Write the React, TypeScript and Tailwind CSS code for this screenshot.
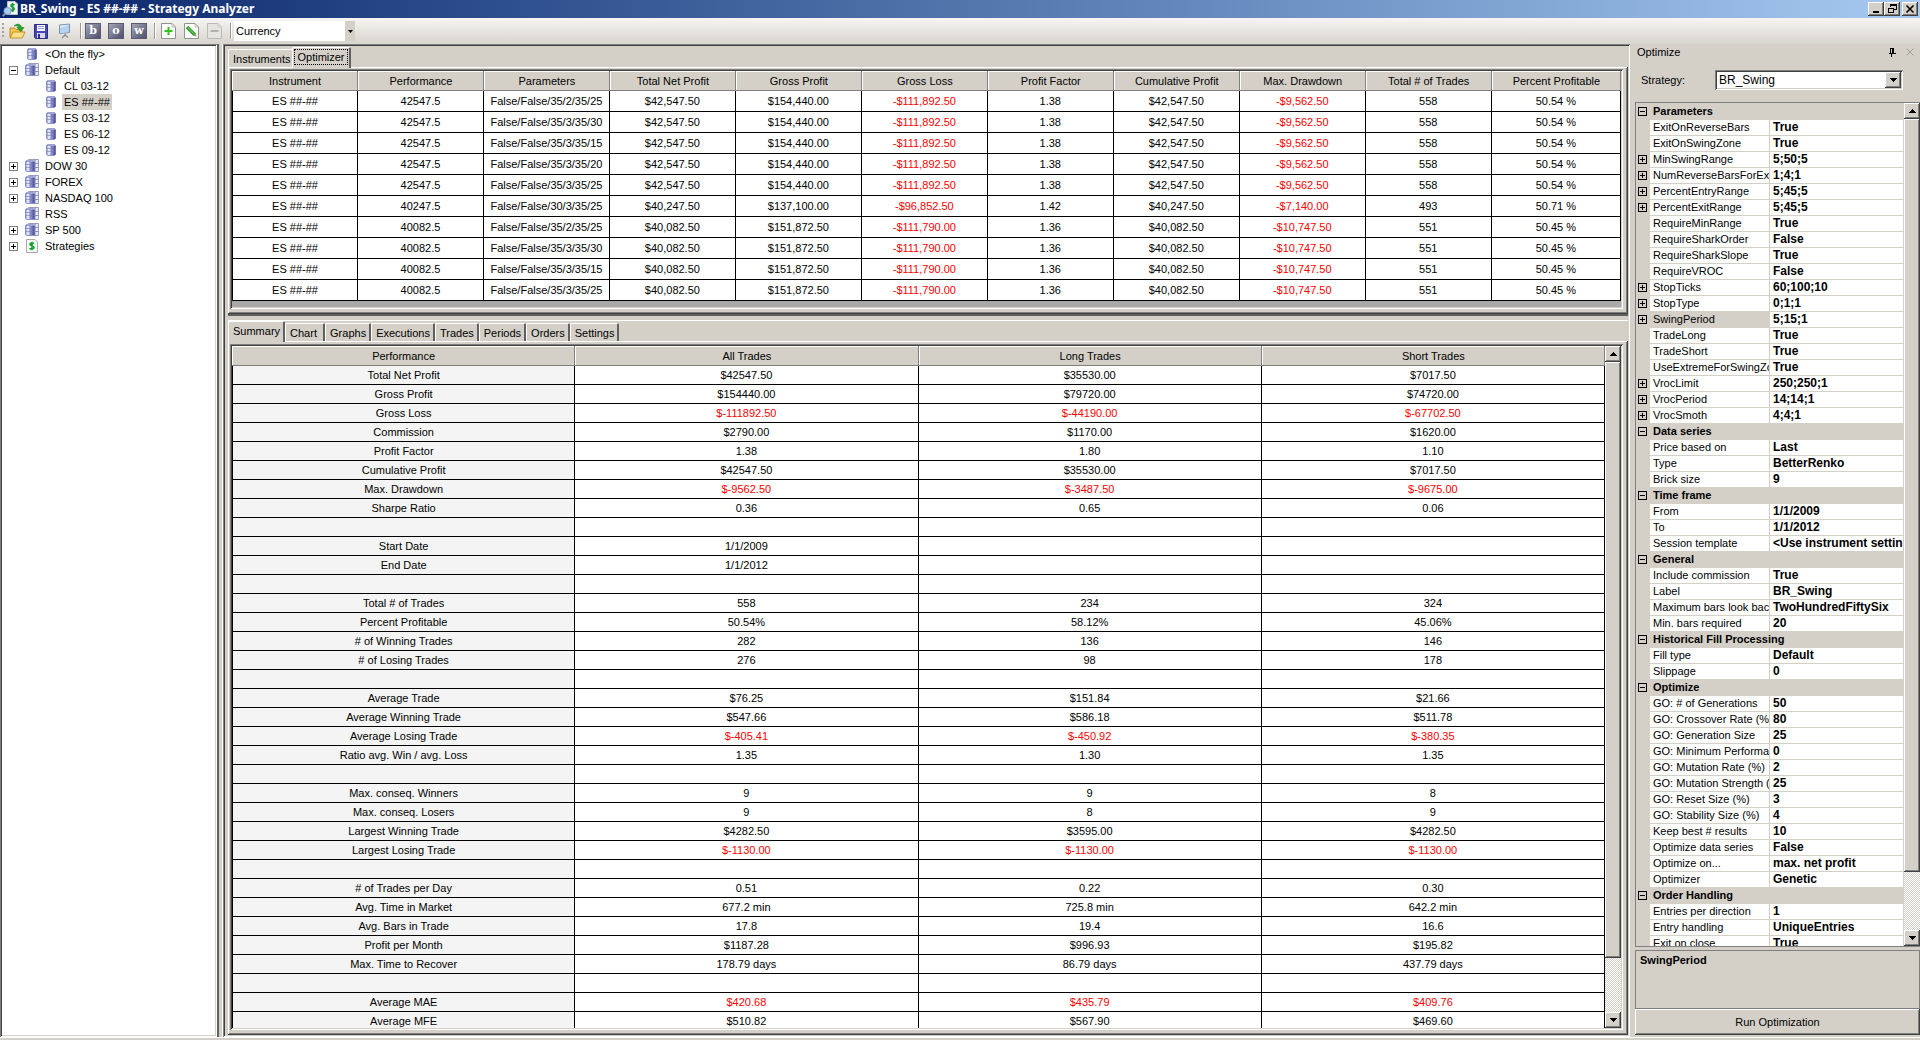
import { useState } from "react"
import type { ReactNode } from "react"
import clsx from "clsx"

const RAISED = "bg-[#d4d0c8] shadow-[inset_-1px_-1px_0_#404040,inset_1px_1px_0_#fff,inset_-2px_-2px_0_#808080]"
const SUNKEN = "shadow-[inset_1px_1px_0_#808080,inset_-1px_-1px_0_#fff,inset_2px_2px_0_#404040,inset_-2px_-2px_0_#d4d0c8]"
const DITHER = "bg-[repeating-conic-gradient(#fff_0_25%,#d4d0c8_0_50%)] bg-[length:2px_2px]"

interface TreeItem {
  label: string
  icon: "single" | "group" | "strategy"
  level: number
  expander?: "+" | "-"
}

const treeItems: TreeItem[] = [
  { label: "<On the fly>", icon: "single", level: 0 },
  { label: "Default", icon: "group", level: 0, expander: "-" },
  { label: "CL 03-12", icon: "single", level: 1 },
  { label: "ES ##-##", icon: "single", level: 1 },
  { label: "ES 03-12", icon: "single", level: 1 },
  { label: "ES 06-12", icon: "single", level: 1 },
  { label: "ES 09-12", icon: "single", level: 1 },
  { label: "DOW 30", icon: "group", level: 0, expander: "+" },
  { label: "FOREX", icon: "group", level: 0, expander: "+" },
  { label: "NASDAQ 100", icon: "group", level: 0, expander: "+" },
  { label: "RSS", icon: "group", level: 0 },
  { label: "SP 500", icon: "group", level: 0, expander: "+" },
  { label: "Strategies", icon: "strategy", level: 0, expander: "+" },
]

const resultColumns = [
  "Instrument", "Performance", "Parameters", "Total Net Profit", "Gross Profit", "Gross Loss",
  "Profit Factor", "Cumulative Profit", "Max. Drawdown", "Total # of Trades", "Percent Profitable",
]

const resultRows = [
  ["ES ##-##", "42547.5", "False/False/35/2/35/25", "$42,547.50", "$154,440.00", "-$111,892.50", "1.38", "$42,547.50", "-$9,562.50", "558", "50.54 %"],
  ["ES ##-##", "42547.5", "False/False/35/3/35/30", "$42,547.50", "$154,440.00", "-$111,892.50", "1.38", "$42,547.50", "-$9,562.50", "558", "50.54 %"],
  ["ES ##-##", "42547.5", "False/False/35/3/35/15", "$42,547.50", "$154,440.00", "-$111,892.50", "1.38", "$42,547.50", "-$9,562.50", "558", "50.54 %"],
  ["ES ##-##", "42547.5", "False/False/35/3/35/20", "$42,547.50", "$154,440.00", "-$111,892.50", "1.38", "$42,547.50", "-$9,562.50", "558", "50.54 %"],
  ["ES ##-##", "42547.5", "False/False/35/3/35/25", "$42,547.50", "$154,440.00", "-$111,892.50", "1.38", "$42,547.50", "-$9,562.50", "558", "50.54 %"],
  ["ES ##-##", "40247.5", "False/False/30/3/35/25", "$40,247.50", "$137,100.00", "-$96,852.50", "1.42", "$40,247.50", "-$7,140.00", "493", "50.71 %"],
  ["ES ##-##", "40082.5", "False/False/35/2/35/25", "$40,082.50", "$151,872.50", "-$111,790.00", "1.36", "$40,082.50", "-$10,747.50", "551", "50.45 %"],
  ["ES ##-##", "40082.5", "False/False/35/3/35/30", "$40,082.50", "$151,872.50", "-$111,790.00", "1.36", "$40,082.50", "-$10,747.50", "551", "50.45 %"],
  ["ES ##-##", "40082.5", "False/False/35/3/35/15", "$40,082.50", "$151,872.50", "-$111,790.00", "1.36", "$40,082.50", "-$10,747.50", "551", "50.45 %"],
  ["ES ##-##", "40082.5", "False/False/35/3/35/25", "$40,082.50", "$151,872.50", "-$111,790.00", "1.36", "$40,082.50", "-$10,747.50", "551", "50.45 %"],
]

const summaryTabs = ["Summary", "Chart", "Graphs", "Executions", "Trades", "Periods", "Orders", "Settings"]

const summaryRows = [
  ["Total Net Profit", "$42547.50", "$35530.00", "$7017.50"],
  ["Gross Profit", "$154440.00", "$79720.00", "$74720.00"],
  ["Gross Loss", "$-111892.50", "$-44190.00", "$-67702.50"],
  ["Commission", "$2790.00", "$1170.00", "$1620.00"],
  ["Profit Factor", "1.38", "1.80", "1.10"],
  ["Cumulative Profit", "$42547.50", "$35530.00", "$7017.50"],
  ["Max. Drawdown", "$-9562.50", "$-3487.50", "$-9675.00"],
  ["Sharpe Ratio", "0.36", "0.65", "0.06"],
  ["", "", "", ""],
  ["Start Date", "1/1/2009", "", ""],
  ["End Date", "1/1/2012", "", ""],
  ["", "", "", ""],
  ["Total # of Trades", "558", "234", "324"],
  ["Percent Profitable", "50.54%", "58.12%", "45.06%"],
  ["# of Winning Trades", "282", "136", "146"],
  ["# of Losing Trades", "276", "98", "178"],
  ["", "", "", ""],
  ["Average Trade", "$76.25", "$151.84", "$21.66"],
  ["Average Winning Trade", "$547.66", "$586.18", "$511.78"],
  ["Average Losing Trade", "$-405.41", "$-450.92", "$-380.35"],
  ["Ratio avg. Win / avg. Loss", "1.35", "1.30", "1.35"],
  ["", "", "", ""],
  ["Max. conseq. Winners", "9", "9", "8"],
  ["Max. conseq. Losers", "9", "8", "9"],
  ["Largest Winning Trade", "$4282.50", "$3595.00", "$4282.50"],
  ["Largest Losing Trade", "$-1130.00", "$-1130.00", "$-1130.00"],
  ["", "", "", ""],
  ["# of Trades per Day", "0.51", "0.22", "0.30"],
  ["Avg. Time in Market", "677.2 min", "725.8 min", "642.2 min"],
  ["Avg. Bars in Trade", "17.8", "19.4", "16.6"],
  ["Profit per Month", "$1187.28", "$996.93", "$195.82"],
  ["Max. Time to Recover", "178.79 days", "86.79 days", "437.79 days"],
  ["", "", "", ""],
  ["Average MAE", "$420.68", "$435.79", "$409.76"],
  ["Average MFE", "$510.82", "$567.90", "$469.60"],
]

// [name, value, expandable]
type Property = [string, string, boolean?]

const propertyGroups: { title: string; items: Property[] }[] = [
  {
    title: "Parameters",
    items: [
      ["ExitOnReverseBars", "True"],
      ["ExitOnSwingZone", "True"],
      ["MinSwingRange", "5;50;5", true],
      ["NumReverseBarsForExit", "1;4;1", true],
      ["PercentEntryRange", "5;45;5", true],
      ["PercentExitRange", "5;45;5", true],
      ["RequireMinRange", "True"],
      ["RequireSharkOrder", "False"],
      ["RequireSharkSlope", "True"],
      ["RequireVROC", "False"],
      ["StopTicks", "60;100;10", true],
      ["StopType", "0;1;1", true],
      ["SwingPeriod", "5;15;1", true],
      ["TradeLong", "True"],
      ["TradeShort", "True"],
      ["UseExtremeForSwingZo", "True"],
      ["VrocLimit", "250;250;1", true],
      ["VrocPeriod", "14;14;1", true],
      ["VrocSmoth", "4;4;1", true],
    ],
  },
  {
    title: "Data series",
    items: [["Price based on", "Last"], ["Type", "BetterRenko"], ["Brick size", "9"]],
  },
  {
    title: "Time frame",
    items: [["From", "1/1/2009"], ["To", "1/1/2012"], ["Session template", "<Use instrument setting"]],
  },
  {
    title: "General",
    items: [
      ["Include commission", "True"],
      ["Label", "BR_Swing"],
      ["Maximum bars look back", "TwoHundredFiftySix"],
      ["Min. bars required", "20"],
    ],
  },
  {
    title: "Historical Fill Processing",
    items: [["Fill type", "Default"], ["Slippage", "0"]],
  },
  {
    title: "Optimize",
    items: [
      ["GO: # of Generations", "50"],
      ["GO: Crossover Rate (%)", "80"],
      ["GO: Generation Size", "25"],
      ["GO: Minimum Performan", "0"],
      ["GO: Mutation Rate (%)", "2"],
      ["GO: Mutation Strength (%", "25"],
      ["GO: Reset Size (%)", "3"],
      ["GO: Stability Size (%)", "4"],
      ["Keep best # results", "10"],
      ["Optimize data series", "False"],
      ["Optimize on...", "max. net profit"],
      ["Optimizer", "Genetic"],
    ],
  },
  {
    title: "Order Handling",
    items: [["Entries per direction", "1"], ["Entry handling", "UniqueEntries"], ["Exit on close", "True"]],
  },
]

function Cylinder({ x = 0 }: { x?: number }) {
  return (
    <g transform={`translate(${x} 0)`}>
      <path d="M0.5 2.5 L2 1.5 H8.5 L9.5 2.5 V11.5 L8.5 12.5 H2 L0.5 11.5 Z" fill="#8489c6" stroke="#8d91c0" />
      <path d="M1.5 3 H4.5 V12 H1.5 Z" fill="#dfe3fb" />
      <path d="M7.5 3 H9.5 V12 H7.5 Z" fill="#50569c" />
      <path d="M1 5.5 H9 M1 8.5 H9" stroke="#7176b4" opacity="0.6" />
      <path d="M2 2 H8.5" stroke="#b4b9e6" />
    </g>
  )
}

function TreeIcon({ kind }: { kind: TreeItem["icon"] }) {
  if (kind === "strategy") {
    return (
      <svg width="15" height="14" viewBox="0 0 15 14" aria-hidden="true">
        <path d="M1.5 0.5 H10 L12.5 3 V13.5 H1.5 Z" fill="#fafafa" stroke="#aaa" />
        <path d="M9 4.8 C8 3.5 4.8 3.7 5 5.3 C5.2 7 9 6.6 9 8.6 C9 10.4 5.4 10.4 4.6 9.2 M7 2.8 V11.3" fill="none" stroke="#12a32c" strokeWidth="1.6" />
      </svg>
    )
  }
  return (
    <svg width="15" height="14" viewBox="0 0 15 14" aria-hidden="true">
      {kind === "group" && (
        <>
          <path d="M3.5 0.5 H13.5 V12.5 H3.5 Z" fill="#e8eaf6" stroke="#9a9db8" />
          <path d="M10 0.5 V13" stroke="#7f84b8" />
          <path d="M10 4.5 H14 M10 8.5 H14" stroke="#8b90bd" />
        </>
      )}
      <Cylinder x={kind === "group" ? 0 : 2} />
    </svg>
  )
}

function Expander({ open, dark }: { open: boolean; dark?: boolean }) {
  return (
    <button type="button" aria-label={open ? "Collapse" : "Expand"} className="block">
      <svg width="9" height="9" viewBox="0 0 9 9" shapeRendering="crispEdges">
        <rect x="0.5" y="0.5" width="8" height="8" fill={dark ? "none" : "#fff"} stroke={dark ? "#000" : "#808080"} />
        <path d={open ? "M2 4.5 H7" : "M2 4.5 H7 M4.5 2 V7"} stroke="#000" />
      </svg>
    </button>
  )
}

function Arrow({ up }: { up?: boolean }) {
  return (
    <svg width="7" height="4" viewBox="0 0 7 4" shapeRendering="crispEdges" aria-hidden="true">
      <path d={up ? "M0 4 L3.5 0 L7 4 Z" : "M0 0 H7 L3.5 4 Z"} />
    </svg>
  )
}

function ScrollBar({ thumb }: { thumb: string }) {
  return (
    <div className={clsx("flex w-4 shrink-0 flex-col", DITHER)}>
      <button type="button" aria-label="Scroll up" className={clsx("flex h-4 shrink-0 items-center justify-center", RAISED)}>
        <Arrow up />
      </button>
      <div className="min-h-0 flex-1">
        <div className={clsx(thumb, RAISED)} />
      </div>
      <button type="button" aria-label="Scroll down" className={clsx("flex h-4 shrink-0 items-center justify-center", RAISED)}>
        <Arrow />
      </button>
    </div>
  )
}

function TitleButton({ label, children }: { label: string; children: ReactNode }) {
  return (
    <button type="button" aria-label={label} className={clsx("flex h-3.5 w-4 items-center justify-center", RAISED)}>
      <svg width="12" height="10" viewBox="0 0 12 10" shapeRendering="crispEdges" fill="none" stroke="#000">
        {children}
      </svg>
    </button>
  )
}

function TitleBar() {
  return (
    <header className="flex h-[18px] shrink-0 items-center bg-linear-to-r from-[#0a246a] to-[#a6caf0] px-0.5">
      <svg width="16" height="16" viewBox="0 0 16 16" aria-hidden="true">
        <path d="M5.5 0.5 H13 L15.5 3 V13.5 H5.5 Z" fill="#f4f6f4" stroke="#b9c2c9" />
        <path d="M12.5 4 C11 2.6 8.6 3.4 9 5 C9.4 6.6 12.4 6 12.2 8 C12 9.8 9.4 9.6 8.4 8.6 M10.6 2 V11" fill="none" stroke="#16a030" strokeWidth="1.6" />
        <circle cx="5.5" cy="10" r="3.6" fill="#a9cdec" stroke="#7ba4cf" />
        <path d="M3 12.5 L0.8 15.2" stroke="#8a8f98" strokeWidth="2" />
      </svg>
      <h1 className="ml-0.5 flex-1 font-['Noto_Sans','Open_Sans',sans-serif] text-xs leading-4 font-bold text-white">
        BR_Swing - ES ##-## - Strategy Analyzer
      </h1>
      <TitleButton label="Minimize">
        <path d="M3 8 H9" strokeWidth="2" />
      </TitleButton>
      <TitleButton label="Restore">
        <path d="M4.5 3 V0.5 H10.5 V5.5 H8 M4 1 H11 M2.5 4.5 H7.5 V8.5 H2.5 Z M2 4 H8" />
      </TitleButton>
      <div className="w-0.5" />
      <TitleButton label="Close">
        <path d="M2.5 1.5 L9.5 8.5 M9.5 1.5 L2.5 8.5" strokeWidth="1.6" shapeRendering="auto" />
      </TitleButton>
    </header>
  )
}

function Separator() {
  return <div className="h-4 w-0.5 border-l border-[#9c9a94] bg-white" />
}

function LetterButton({ letter }: { letter: string }) {
  return (
    <button
      type="button"
      className="flex size-4 items-center justify-center border border-[#5a5c74] bg-linear-to-br from-[#a5a7b5] to-[#4c4f6e] pb-0.5 font-['DejaVu_Serif',serif] text-[11px] leading-none font-bold text-white"
    >
      {letter}
    </button>
  )
}

function PageButton({ label, disabled, children }: { label: string; disabled?: boolean; children: ReactNode }) {
  return (
    <button type="button" aria-label={label} disabled={disabled}>
      <svg width="15" height="16" viewBox="0 0 15 16">
        <path d="M0.5 0.5 H11 L14.5 4 V15.5 H0.5 Z" fill={disabled ? "#e6e4df" : "#fbfcfb"} stroke={disabled ? "#bdbab3" : "#8c9690"} />
        <path d="M11 0.5 V4 H14.5" fill="none" stroke={disabled ? "#cfccc6" : "#b4bcb7"} />
        {children}
      </svg>
    </button>
  )
}

function Toolbar() {
  return (
    <div className="flex h-[26px] shrink-0 items-center bg-linear-to-b from-[#f6f5f3] to-[#d8d5cd] pl-0.5">
      <svg width="3" height="16" viewBox="0 0 3 16" shapeRendering="crispEdges" aria-hidden="true">
        <path d="M0 1 H2 M0 5 H2 M0 9 H2 M0 13 H2" stroke="#a5a29a" strokeWidth="2" />
      </svg>
      <div className="flex items-center gap-2 pr-2 pl-1">
        <button type="button" aria-label="Open">
          <svg width="17" height="16" viewBox="0 0 17 16">
            <path d="M1 14.5 V5 H5.5 L7 6.5 H13 V14.5 Z" fill="#f3c64e" stroke="#b88a1e" />
            <path d="M1.2 15 L4 9 H16 L13.2 15 Z" fill="#fbe08a" stroke="#c1932a" />
            <path d="M5 3 C8 0 12 1 12.6 4.5 H15 L11.6 8.5 L8 4.5 H10.2 C9.6 3 7.6 2.2 5 3 Z" fill="#27a827" stroke="#147414" strokeWidth="0.6" />
          </svg>
        </button>
        <button type="button" aria-label="Save">
          <svg width="14" height="15" viewBox="0 0 14 15">
            <path d="M0.5 0.5 H13.5 V14.5 H1.5 L0.5 13.5 Z" fill="#4646b8" stroke="#2d2d84" />
            <rect x="3" y="1" width="8" height="6" fill="#f6f6fb" />
            <path d="M4 2.5 H10 M4 4.5 H10" stroke="#9a9ad6" />
            <rect x="3" y="9" width="8" height="5" fill="#d7d7ee" />
            <rect x="4" y="10" width="2" height="4" fill="#30308c" />
          </svg>
        </button>
        <button type="button" aria-label="Presentation" className="pl-0.5">
          <svg width="14" height="16" viewBox="0 0 14 16">
            <path d="M1.5 2 L11.5 1 V9.5 L1.5 10.5 Z" fill="#dcecfa" stroke="#7e93ad" />
            <path d="M2 5 L11 2 V9 L2 10 Z" fill="#b4d2ef" />
            <path d="M7 10.5 V12 L4 15 M7 12 L10 14.5" fill="none" stroke="#85888e" strokeWidth="1.2" />
          </svg>
        </button>
      </div>
      <Separator />
      <div className="flex items-center gap-[7px] pl-[3px]">
        <LetterButton letter="b" />
        <LetterButton letter="o" />
        <LetterButton letter="w" />
        <Separator />
      </div>
      <div className="flex items-center gap-2 pl-[5px]">
        <PageButton label="Add">
          <path d="M7.5 4 V12 M3.5 8 H11.5" stroke="#35c322" strokeWidth="2" />
        </PageButton>
        <PageButton label="Edit">
          <path d="M3 4 L11 12" stroke="#2f9b2b" strokeWidth="3.4" />
          <path d="M3.4 4 L10.6 11.2" stroke="#8fdc7c" strokeWidth="1" />
          <path d="M10.6 12.8 L12.6 13.4 L12 11.4 Z" fill="#c44" />
        </PageButton>
        <PageButton label="Remove" disabled>
          <path d="M3.5 8 H11.5" stroke="#b3b0a9" strokeWidth="2" />
        </PageButton>
        <Separator />
      </div>
      <div className="relative ml-0.5 flex h-5 w-[121px] bg-white">
        <select aria-label="Display units" className="w-full appearance-none bg-white pl-0.5 text-[11px] leading-4 text-black outline-none">
          <option>Currency</option>
        </select>
        <div className="pointer-events-none absolute inset-y-0 right-0 flex w-2.5 items-center justify-center bg-[#d4d0c8]">
          <svg width="5" height="3" viewBox="0 0 5 3" aria-hidden="true">
            <path d="M0 0 H5 L2.5 3 Z" />
          </svg>
        </div>
      </div>
    </div>
  )
}

function InstrumentTree() {
  const [selected, setSelected] = useState("ES ##-##")
  return (
    <nav className={clsx("w-[217px] shrink-0 overflow-hidden bg-white p-0.5", SUNKEN)}>
      <ul>
        {treeItems.map((item) => (
          <li key={item.label} className={clsx("flex h-4 items-center", item.level === 1 ? "pl-[42px]" : "pl-[7px]")}>
            {item.level === 0 && (
              <div className="w-4 shrink-0">{item.expander && <Expander open={item.expander === "-"} />}</div>
            )}
            <TreeIcon kind={item.icon} />
            <button
              type="button"
              onClick={() => setSelected(item.label)}
              className={clsx("ml-[3px] h-4 px-0.5 leading-4", selected === item.label && "bg-[#d4d0c8]")}
            >
              {item.label}
            </button>
          </li>
        ))}
      </ul>
    </nav>
  )
}

function Tab({ label, active, focused, onClick }: { label: string; active: boolean; focused?: boolean; onClick: () => void }) {
  return (
    <button
      type="button"
      role="tab"
      aria-selected={active}
      onClick={onClick}
      className={clsx(
        "min-w-10 rounded-t-xs border-t border-r-2 border-l border-t-white border-r-[#606060] border-l-white bg-[#d4d0c8] text-left leading-4",
        active ? "relative -mb-px h-[21px] pb-[3px] not-first:-ml-[3px]" : "h-[18px]",
        focused ? "px-px" : "pr-[3px] pl-1"
      )}
    >
      {focused ? <span className="block border border-dotted border-black px-0.5 leading-[14px]">{label}</span> : label}
    </button>
  )
}

function HeaderCell({ className, children }: { className?: string; children: ReactNode }) {
  return (
    <th
      scope="col"
      className={clsx("h-5 bg-[#d4d0c8] p-0 font-normal shadow-[inset_-1px_-1px_0_#808080,inset_1px_1px_0_#fff]", className)}
    >
      {children}
    </th>
  )
}

function ResultsPane() {
  const [tab, setTab] = useState("Optimizer")
  return (
    <section className="flex shrink-0 flex-col">
      <div role="tablist" className="flex h-[21px] items-end">
        {["Instruments", "Optimizer"].map((t) => (
          <Tab key={t} label={t} active={tab === t} focused={tab === t} onClick={() => setTab(t)} />
        ))}
      </div>
      <div className={clsx("p-0.5 pr-[5px] pb-[5px]", RAISED)}>
        <div className={clsx("bg-[#a9a9a9] p-0.5 pb-2", SUNKEN)}>
          <table className="w-full table-fixed border-separate border-spacing-0 bg-white text-center">
            <thead>
              <tr>
                {resultColumns.map((c) => (
                  <HeaderCell key={c} className="w-[9.07%] last:w-auto">
                    {c}
                  </HeaderCell>
                ))}
              </tr>
            </thead>
            <tbody>
              {resultRows.map((row, i) => (
                <tr key={i}>
                  {row.map((cell, j) => (
                    <td
                      key={j}
                      className={clsx(
                        "h-[21px] overflow-hidden border-r border-b border-black p-0 leading-4 whitespace-nowrap first:border-l",
                        cell.startsWith("-") && "text-[#ff0000]"
                      )}
                    >
                      {cell}
                    </td>
                  ))}
                </tr>
              ))}
            </tbody>
          </table>
        </div>
      </div>
    </section>
  )
}

function SummaryPane() {
  const [tab, setTab] = useState("Summary")
  return (
    <section className="flex min-h-0 flex-1 flex-col">
      <div role="tablist" className="flex h-[21px] items-end border-t border-white">
        {summaryTabs.map((t) => (
          <Tab key={t} label={t} active={tab === t} onClick={() => setTab(t)} />
        ))}
      </div>
      <div className={clsx("flex min-h-0 flex-1 p-0.5 pt-[3px] pr-[5px] pb-[5px]", RAISED)}>
        <div className={clsx("flex min-w-0 flex-1 p-0.5", SUNKEN)}>
          <div className="min-w-0 flex-1 overflow-hidden">
            <table className="w-full table-fixed border-separate border-spacing-0 bg-white text-center">
              <thead>
                <tr>
                  {["Performance", "All Trades", "Long Trades", "Short Trades"].map((c) => (
                    <HeaderCell key={c}>{c}</HeaderCell>
                  ))}
                </tr>
              </thead>
              <tbody>
                {summaryRows.map(([name, ...values], i) => (
                  <tr key={i}>
                    <td className="h-[19px] border-x border-b border-black bg-[#f4f4f4] p-0 leading-4">{name}</td>
                    {values.map((v, j) => (
                      <td
                        key={j}
                        className={clsx(
                          "h-[19px] border-r border-b border-black p-0 leading-4",
                          (v.startsWith("$-") || name === "Average MAE") && "text-[#ff0000]"
                        )}
                      >
                        {v}
                      </td>
                    ))}
                  </tr>
                ))}
              </tbody>
            </table>
          </div>
          <ScrollBar thumb="h-11/12" />
        </div>
      </div>
    </section>
  )
}

function PropertyGrid() {
  const [selected, setSelected] = useState("SwingPeriod")
  return (
    <>
      <div className="flex min-h-0 flex-1 border border-r-0 border-[#808080]">
        <div className="min-w-0 flex-1 overflow-hidden pt-px">
          <table className="w-full table-fixed border-separate border-spacing-0 text-left">
            <colgroup>
              <col className="w-3.5" />
              <col className="w-[120px]" />
              <col />
            </colgroup>
            {propertyGroups.map((group) => (
              <tbody key={group.title}>
                <tr>
                  <td className="h-4 p-0 pb-px pl-0.5">
                    <Expander open dark />
                  </td>
                  <th colSpan={2} className="h-4 p-0 pb-px pl-[3px] leading-[15px] font-bold">
                    {group.title}
                  </th>
                </tr>
                {group.items.map(([name, value, expandable]) => (
                  <tr key={name} onClick={() => setSelected(name)}>
                    <td className="h-4 p-0 pb-px pl-0.5">{expandable && <Expander open={false} dark />}</td>
                    <th
                      scope="row"
                      className={clsx(
                        "h-4 overflow-hidden border-r border-b border-[#d4d0c8] p-0 pl-[3px] leading-[15px] font-normal whitespace-nowrap",
                        selected === name ? "bg-[#d4d0c8]" : "bg-white"
                      )}
                    >
                      {name}
                    </th>
                    <td className="h-4 overflow-hidden border-r border-b border-[#d4d0c8] bg-white p-0 pl-[3px] text-xs leading-[15px] font-bold whitespace-nowrap">
                      {value}
                    </td>
                  </tr>
                ))}
              </tbody>
            ))}
          </table>
        </div>
        <ScrollBar thumb="h-13/14" />
      </div>
      <div className="mt-[3px] h-[59px] shrink-0 border border-[#808080] px-1 py-px leading-4 font-bold">{selected}</div>
    </>
  )
}

function OptimizePanel() {
  return (
    <aside className="flex w-[285px] shrink-0 flex-col pb-0.5">
      <div className="flex h-4 items-center justify-between pr-1.5 pl-0.5">
        <h2>Optimize</h2>
        <div className="flex items-center gap-2.5">
          <button type="button" aria-label="Auto hide">
            <svg width="8" height="9" viewBox="0 0 8 9" shapeRendering="crispEdges" fill="none" stroke="#000">
              <path d="M2.5 0 V5 M2 0.5 H6 M4.5 0 V5 M5.5 0 V5 M0.5 5.5 H7.5 M3.5 5 V9" />
            </svg>
          </button>
          <button type="button" aria-label="Close panel">
            <svg width="8" height="8" viewBox="0 0 8 8" stroke="#a5a29a">
              <path d="M0.5 0.5 L7.5 7.5 M7.5 0.5 L0.5 7.5" />
            </svg>
          </button>
        </div>
      </div>
      <div className="flex items-center justify-between py-2.5 pr-[17px] pl-1.5">
        <label htmlFor="strategy">Strategy:</label>
        <div className={clsx("relative h-5 w-[188px] bg-white p-0.5", SUNKEN)}>
          <select id="strategy" className="block h-4 w-full appearance-none bg-white pl-0.5 text-xs leading-4 text-black outline-none">
            <option>BR_Swing</option>
          </select>
          <div className={clsx("pointer-events-none absolute top-0.5 right-0.5 flex size-4 items-center justify-center", RAISED)}>
            <Arrow />
          </div>
        </div>
      </div>
      <div className="h-0.5 shrink-0" />
      <PropertyGrid />
      <button type="button" className={clsx("h-[26px] shrink-0", RAISED)}>
        Run Optimization
      </button>
    </aside>
  )
}

export default function App() {
  return (
    <div className="flex h-screen flex-col overflow-hidden bg-[#d4d0c8] font-['Liberation_Sans',Arial,sans-serif] text-[11px] leading-4 text-black">
      <TitleBar />
      <Toolbar />
      <main className="flex min-h-0 flex-1">
        <InstrumentTree />
        <div className="w-1.5 shrink-0 border-r border-l-2 border-r-white border-l-[#606060]" />
        <div className={clsx("mr-[5px] flex min-w-0 flex-1 flex-col pt-0.5 pr-0.5 pb-0.5 pl-[5px]", SUNKEN)}>
          <ResultsPane />
          <div className="h-1.5 shrink-0 border-t-2 border-[#606060]" />
          <SummaryPane />
        </div>
        <OptimizePanel />
      </main>
      <footer className="h-[3px] shrink-0 border-t border-white" />
    </div>
  )
}
